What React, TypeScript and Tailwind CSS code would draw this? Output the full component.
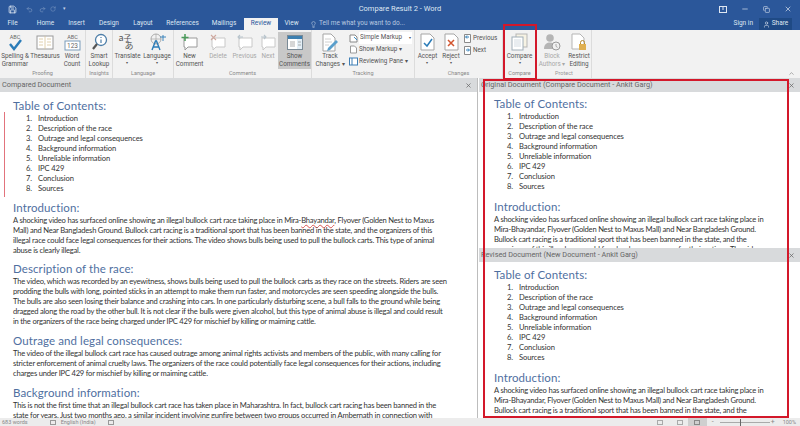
import { ReactNode } from 'react';
import { Save, Undo2, Redo2, RotateCw, Lightbulb, User, X, Minus, Copy, ChevronUp } from 'lucide-react';

const tocItems = [
  'Introduction',
  'Description of the race',
  'Outrage and legal consequences',
  'Background information',
  'Unreliable information',
  'IPC 429',
  'Conclusion',
  'Sources',
];

const tabs = [
  { name: 'File', w: 'w-[25px]' },
  { name: 'Home', w: 'w-[41px]' },
  { name: 'Insert', w: 'w-[21px]' },
  { name: 'Design', w: 'w-[44px]' },
  { name: 'Layout', w: 'w-[24px]' },
  { name: 'References', w: 'w-[55px]' },
  { name: 'Mailings', w: 'w-[28px]' },
];

const originalIntro = [
  'A shocking video has surfaced online showing an illegal bullock cart race taking place in',
  'Mira-Bhayandar, Flyover (Golden Nest to Maxus Mall) and Near Bangladesh Ground.',
  'Bullock cart racing is a traditional sport that has been banned in the state, and the',
  'organizers of this illegal race could face legal consequences for their actions. The video',
];
const revisedIntro = originalIntro.slice(0, 3);

function Heading({ children, className = '' }: { children: ReactNode; className?: string }) {
  return (
    <div className={`h-[14px] text-[11.5px] leading-[14px] text-[#4f6f9f] tracking-[0.1px] whitespace-nowrap ${className}`}>
      {children}
    </div>
  );
}

function Line({ children }: { children: ReactNode }) {
  return <div className="h-[10px] text-[7.6px] tracking-[-0.22px] leading-[10px] text-[#333] whitespace-nowrap">{children}</div>;
}

function Toc() {
  return (
    <div>
      {tocItems.map((item, i) => (
        <div key={item} className="flex h-[10px] pl-[13px] text-[7.6px] tracking-[-0.1px] leading-[10px] text-[#333] whitespace-nowrap">
          <span className="w-[12px]">{i + 1}.</span>
          <span>{item}</span>
        </div>
      ))}
    </div>
  );
}

function PaneHeader({ title, closeClass }: { title: string; closeClass: string }) {
  return (
    <div className="h-[14px] shrink-0 bg-[#d8dadc] flex items-center justify-between text-[7.3px] text-[#666] font-['Roboto',sans-serif] whitespace-nowrap">
      <span className="pl-[2px]">{title}</span>
      <X size={7} strokeWidth={2.5} className={closeClass} />
    </div>
  );
}

function RibbonButton({ w, icon, label, sub, disabled, caret, active }: {
  w: string;
  icon: ReactNode;
  label: string;
  sub?: string;
  disabled?: boolean;
  caret?: boolean;
  active?: boolean;
}) {
  return (
    <div className={`${w} h-[37px] shrink-0 flex flex-col items-center ${active ? 'bg-[#c8c8c8]' : ''}`}>
      <div className="h-[20px] flex items-center justify-center">{icon}</div>
      <div className={`text-[6.3px] leading-[8px] text-center whitespace-nowrap ${disabled ? 'text-[#a8a8a8]' : 'text-[#555]'}`}>
        <div>{label}</div>
        {sub && <div>{sub}</div>}
        {caret && <div className="text-[4px] leading-[6px]">▾</div>}
      </div>
    </div>
  );
}

function RibbonGroup({ label, w, children, disabled }: { label: string; w: string; children: ReactNode; disabled?: boolean }) {
  return (
    <div className={`${w} shrink-0 h-full flex flex-col border-r border-[#dcdcdc]`}>
      <div className="flex flex-1 pt-[2px]">{children}</div>
      <div className={`h-[9px] text-center text-[5.5px] leading-[8px] ${disabled ? 'text-[#999]' : 'text-[#888]'}`}>{label}</div>
    </div>
  );
}

function SpellIcon() {
  return (
    <svg width="18" height="19" viewBox="0 0 18 19">
      <text x="9" y="6" textAnchor="middle" fontSize="5.5" fill="#666">ABC</text>
      <path d="M4 11l4 5 7-9" fill="none" stroke="#2b7cb8" strokeWidth="2.4" />
    </svg>
  );
}

function BookIcon() {
  return (
    <svg width="18" height="17" viewBox="0 0 18 17">
      <rect x="1" y="2" width="16" height="13" fill="#fff" stroke="#9a9a9a" />
      <path d="M9 2v13M3 5h4M3 8h4M3 11h4M11 5h4M11 8h4M11 11h4" stroke="#d8c49a" strokeWidth="0.8" />
    </svg>
  );
}

function CountIcon() {
  return (
    <svg width="17" height="19" viewBox="0 0 17 19">
      <text x="8.500" y="6" textAnchor="middle" fontSize="5.5" fill="#666">ABC</text>
      <rect x="1" y="8" width="15" height="9" fill="#fff" stroke="#7a9cba" />
      <text x="8.500" y="15" textAnchor="middle" fontSize="6.5" fill="#666">123</text>
    </svg>
  );
}

function LookupIcon() {
  return (
    <svg width="17" height="18" viewBox="0 0 17 18">
      <circle cx="10" cy="7" r="5.500" fill="#fff" stroke="#4d7ea8" strokeWidth="1.3" />
      <path d="M6 11l-4 5" stroke="#555" strokeWidth="2.2" />
      <path d="M10 4v1M10 6.500V10" stroke="#4d7ea8" strokeWidth="1.2" />
    </svg>
  );
}

function TranslateIcon() {
  return (
    <span className="relative block w-[18px] h-[18px] text-[#555] font-['Noto_Sans_CJK_JP',sans-serif]">
      <span className="absolute left-0 top-0 text-[9px] leading-[10px]">a</span>
      <span className="absolute left-[5px] top-[0px] text-[8px] leading-[10px]">子</span>
      <span className="absolute left-[6px] top-[8px] text-[9px] leading-[10px]">あ</span>
    </span>
  );
}

function LanguageIcon() {
  return (
    <svg width="20" height="18" viewBox="0 0 20 18">
      <circle cx="9" cy="6" r="5" fill="none" stroke="#9a9a9a" strokeWidth="0.8" />
      <path d="M4 6h10M9 1v10" stroke="#9a9a9a" strokeWidth="0.6" />
      <path d="M5 17l3.500-9h1l3.500 9M6.500 14h5" fill="none" stroke="#2b7cb8" strokeWidth="1.4" />
      <path d="M13 4h6M16 2v6" stroke="#2b7cb8" strokeWidth="0.9" />
    </svg>
  );
}

function CommentIcon({ plus, mark, disabled }: { plus?: boolean; mark?: 'x' | 'l' | 'r'; disabled?: boolean }) {
  const stroke = disabled ? '#c8c8c8' : '#9a9a9a';
  return (
    <svg width="18" height="17" viewBox="0 0 18 17">
      <path d="M3 4h13v9H7l-3 3v-3H3z" fill="#fff" stroke={stroke} />
      {plus && <path d="M4 0v7M0.500 3.500h7" stroke="#4a9a5a" strokeWidth="1.5" />}
      {mark === 'x' && <path d="M2 1l5 5M7 1L2 6" stroke="#cfa9a0" strokeWidth="1.1" />}
      {mark === 'l' && <path d="M7 3H2m2-2L2 3l2 2" fill="none" stroke="#b8c4cc" strokeWidth="1.1" />}
      {mark === 'r' && <path d="M2 3h5M5 1l2 2-2 2" fill="none" stroke="#b8c4cc" strokeWidth="1.1" />}
    </svg>
  );
}

function ShowCommentsIcon() {
  return (
    <svg width="16" height="15" viewBox="0 0 16 15">
      <rect x="0.500" y="0.500" width="15" height="14" fill="#fff" stroke="#7a8a96" />
      <rect x="1" y="1" width="14" height="3" fill="#3d7fb0" />
      <rect x="10" y="4" width="5" height="10" fill="#e3eef6" />
      <path d="M3 7h5M3 9h5M3 11h5M11 7h3M11 10h3" stroke="#9a9a9a" strokeWidth="0.8" />
    </svg>
  );
}

function TrackIcon() {
  return (
    <svg width="18" height="19" viewBox="0 0 18 19">
      <path d="M2 1h8l4 4v13H2z" fill="#fff" stroke="#a5a5a5" />
      <path d="M4 6h6M4 9h7M4 12h4" stroke="#c4c4c4" strokeWidth="0.8" />
      <path d="M7 15l8-8 2 2-8 8-3 1z" fill="#5a9fcc" />
    </svg>
  );
}

function DocMark({ kind }: { kind: 'check' | 'x' }) {
  return (
    <svg width="15" height="18" viewBox="0 0 15 18">
      <path d="M1 1h9l4 4v12H1z" fill="#fff" stroke="#a5a5a5" />
      {kind === 'check' ? (
        <path d="M4 10l3 3 5-7" fill="none" stroke="#2b7cb8" strokeWidth="1.5" />
      ) : (
        <path d="M4 7l6 6M10 7l-6 6" stroke="#d2552f" strokeWidth="1.5" />
      )}
    </svg>
  );
}

function CompareIcon() {
  return (
    <svg width="17" height="18" viewBox="0 0 17 18">
      <rect x="5" y="1" width="11" height="13" fill="#f7f3e4" stroke="#b5b5b5" />
      <rect x="1" y="4" width="11" height="13" fill="#fff" stroke="#a0aeb8" />
      <path d="M3 7h7M3 9h7M3 11h7M3 13h7" stroke="#c8d2da" strokeWidth="0.8" />
    </svg>
  );
}

function BlockIcon() {
  return (
    <svg width="18" height="18" viewBox="0 0 18 18">
      <circle cx="7" cy="5" r="3.800" fill="#b5b5b5" />
      <path d="M1 16c0-5 3-6.500 6-6.500s4 1 5 2.500v4z" fill="#b5b5b5" />
      <circle cx="13" cy="13" r="4" fill="#f1f1f1" stroke="#9a9a9a" />
      <path d="M13 11v2.400l1.600 1" fill="none" stroke="#9a9a9a" strokeWidth="0.8" />
    </svg>
  );
}

function RestrictIcon() {
  return (
    <svg width="16" height="19" viewBox="0 0 16 19">
      <path d="M1 1h8l4 4v11H1z" fill="#fff" stroke="#b5b5b5" />
      <rect x="8" y="11" width="7" height="6" fill="#e0b050" />
      <path d="M9.500 11V9.500a2 2 0 0 1 4 0V11" fill="none" stroke="#b58a30" />
    </svg>
  );
}

function Ribbon() {
  return (
    <div className="h-[48px] shrink-0 bg-[#f2f2f2] flex font-['Roboto',sans-serif] relative">
      <RibbonGroup label="Proofing" w="w-[86px]">
        <RibbonButton w="w-[30px]" icon={<SpellIcon />} label="Spelling &" sub="Grammar" />
        <RibbonButton w="w-[30px]" icon={<BookIcon />} label="Thesaurus" />
        <RibbonButton w="w-[24px]" icon={<CountIcon />} label="Word" sub="Count" />
      </RibbonGroup>
      <RibbonGroup label="Insights" w="w-[27px]">
        <RibbonButton w="w-[26px]" icon={<LookupIcon />} label="Smart" sub="Lookup" />
      </RibbonGroup>
      <RibbonGroup label="Language" w="w-[61px]">
        <RibbonButton w="w-[29px]" icon={<TranslateIcon />} label="Translate" caret />
        <RibbonButton w="w-[30px]" icon={<LanguageIcon />} label="Language" caret />
      </RibbonGroup>
      <RibbonGroup label="Comments" w="w-[138px]">
        <RibbonButton w="w-[31px]" icon={<CommentIcon plus />} label="New" sub="Comment" />
        <RibbonButton w="w-[26px]" icon={<CommentIcon mark="x" disabled />} label="Delete" disabled />
        <RibbonButton w="w-[27px]" icon={<CommentIcon mark="l" disabled />} label="Previous" disabled />
        <RibbonButton w="w-[20px]" icon={<CommentIcon mark="r" disabled />} label="Next" disabled />
        <RibbonButton w="w-[33px]" icon={<ShowCommentsIcon />} label="Show" sub="Comments" active />
      </RibbonGroup>
      <RibbonGroup label="Tracking" w="w-[103px]">
        <RibbonButton w="w-[36px]" icon={<TrackIcon />} label="Track" sub="Changes ▾" />
        <div className="flex flex-col text-[6.3px] leading-[11.5px] text-[#555] whitespace-nowrap">
          <div className="flex items-center">
            <span className="w-[11px] h-[11px] flex items-center justify-center">
              <svg width="9" height="9" viewBox="0 0 9 9"><path d="M1 1h5l2 2v5H1z" fill="#fff" stroke="#888" /><path d="M5 3l3 3" stroke="#3f8fc4" /></svg>
            </span>
            <span className="w-[53px] h-[12px] bg-white flex items-center justify-between px-[1px]">
              Simple Markup<span className="text-[4px]">▾</span>
            </span>
          </div>
          <div className="flex items-center">
            <span className="w-[11px] h-[11px] flex items-center justify-center">
              <svg width="9" height="9" viewBox="0 0 9 9"><path d="M1.500 1h4l2 2v5h-6z" fill="#fff" stroke="#999" /></svg>
            </span>
            Show Markup ▾
          </div>
          <div className="flex items-center">
            <span className="w-[11px] h-[11px] flex items-center justify-center">
              <svg width="9" height="9" viewBox="0 0 9 9"><rect x="0.500" y="1" width="8" height="7" fill="#fff" stroke="#3f7fb5" /><path d="M3 1v7" stroke="#3f7fb5" /></svg>
            </span>
            Reviewing Pane ▾
          </div>
        </div>
      </RibbonGroup>
      <RibbonGroup label="Changes" w="w-[88px]">
        <RibbonButton w="w-[25px]" icon={<DocMark kind="check" />} label="Accept" caret />
        <RibbonButton w="w-[22px]" icon={<DocMark kind="x" />} label="Reject" caret />
        <div className="flex flex-col text-[6.3px] leading-[12px] text-[#555] pl-[2px]">
          <div className="flex items-center gap-[2px]">
            <svg width="7" height="9" viewBox="0 0 7 9"><path d="M0.500 0.500h6v8h-6z" fill="#fff" stroke="#8a8a8a" /><path d="M5 3H2m1-1.500L1.500 3 3 4.500" fill="none" stroke="#2b7cb8" /></svg>
            Previous
          </div>
          <div className="flex items-center gap-[2px]">
            <svg width="7" height="9" viewBox="0 0 7 9"><path d="M0.500 0.500h6v8h-6z" fill="#fff" stroke="#8a8a8a" /><path d="M2 4h3M4 2.500 5.500 4 4 5.500" fill="none" stroke="#2b7cb8" /></svg>
            Next
          </div>
        </div>
      </RibbonGroup>
      <RibbonGroup label="Compare" w="w-[34px]">
        <RibbonButton w="w-[33px]" icon={<CompareIcon />} label="Compare" caret />
      </RibbonGroup>
      <RibbonGroup label="Protect" w="w-[55px]" disabled>
        <RibbonButton w="w-[30px]" icon={<BlockIcon />} label="Block" sub="Authors ▾" disabled />
        <RibbonButton w="w-[24px]" icon={<RestrictIcon />} label="Restrict" sub="Editing" />
      </RibbonGroup>
      <ChevronUp size={7} className="absolute right-[5px] bottom-[1px] text-[#777]" />
    </div>
  );
}

function TitleBar() {
  return (
    <div className="h-[30px] shrink-0 bg-[#2b579a] text-white font-['Roboto',sans-serif] relative">
      <div className="h-[18px] flex items-center justify-between">
        <div className="flex items-center pl-[8px] gap-[4px] w-[120px]">
          <Save size={9} strokeWidth={2} className="text-[#e6edf6]" />
          <Undo2 size={7} className="ml-[5px] text-[#7f9bc4]" />
          <Redo2 size={7} className="ml-[2px] text-[#7f9bc4]" />
          <RotateCw size={6} className="text-[#7f9bc4]" />
          <span className="ml-[3px] text-[5px] text-[#c8d5e8]">▾</span>
        </div>
        <div className="text-[7.5px] text-[#dfe7f2]">Compare Result 2 - Word</div>
        <div className="flex items-center justify-end gap-[14px] pr-[8px] w-[120px] text-[#dfe7f2]">
          <svg width="8" height="7" viewBox="0 0 8 7"><rect x="0.500" y="0.500" width="7" height="6" fill="none" stroke="currentColor" /><path d="M4 1v3" stroke="currentColor" /></svg>
          <Minus size={8} />
          <Copy size={7} />
          <X size={8} />
        </div>
      </div>
      <div className="h-[12px] flex items-stretch text-[6.5px] text-[#dfe7f2] whitespace-nowrap">
        {tabs.map((t) => (
          <div key={t.name} className={`${t.w} flex items-center justify-center`}>{t.name}</div>
        ))}
        <div className="ml-[6px] w-[34px] bg-[#f2f2f2] text-[#2b579a] flex items-center justify-center">Review</div>
        <div className="w-[27px] flex items-center justify-center">View</div>
        <div className="ml-[5px] flex items-center gap-[2px] text-[#b9c9e0]">
          <Lightbulb size={7} />
          Tell me what you want to do...
        </div>
        <div className="ml-auto flex items-center">
          <span className="mr-[6px]">Sign in</span>
          <span className="h-full w-[33px] mr-[8px] bg-[#1f4a85] flex items-center justify-center gap-[2px]">
            <User size={7} />
            Share
          </span>
        </div>
      </div>
    </div>
  );
}

function ComparedDocument() {
  return (
    <div className="w-[478px] shrink-0 flex flex-col border-r border-[#bdbdbd]">
      <PaneHeader title="Compared Document" closeClass="mr-[5px]" />
      <div className="flex-1 overflow-hidden bg-white pl-[13px] pt-[7px] font-['Lato',sans-serif] relative">
        <div className="absolute left-[4px] top-[20px] h-[85px] w-[1px] bg-[#e2737c]" />
        <Heading>Table of Contents:</Heading>
        <Toc />
        <Heading className="mt-[8px]">Introduction:</Heading>
        <Line>A shocking video has surfaced online showing an illegal bullock cart race taking place in Mira-<span className="underline decoration-wavy decoration-[#d9534f]">Bhayandar</span>, Flyover (Golden Nest to Maxus</Line>
        <Line>Mall) and Near Bangladesh Ground. Bullock cart racing is a traditional sport that has been banned in the state, and the organizers of this</Line>
        <Line>illegal race could face legal consequences for their actions. The video shows bulls being used to pull the bullock carts. This type of animal</Line>
        <Line>abuse is clearly illegal.</Line>
        <Heading className="mt-[7px]">Description of the race:</Heading>
        <Line>The video, which was recorded by an eyewitness, shows bulls being used to pull the bullock carts as they race on the streets. Riders are seen</Line>
        <Line>prodding the bulls with long, pointed sticks in an attempt to make them run faster, and motorcycles are seen speeding alongside the bulls.</Line>
        <Line>The bulls are also seen losing their balance and crashing into cars. In one particularly disturbing scene, a bull falls to the ground while being</Line>
        <Line>dragged along the road by the other bull. It is not clear if the bulls were given alcohol, but this type of animal abuse is illegal and could result</Line>
        <Line>in the organizers of the race being charged under IPC 429 for mischief by killing or maiming cattle.</Line>
        <Heading className="mt-[8px]">Outrage and legal consequences:</Heading>
        <Line>The video of the illegal bullock cart race has caused outrage among animal rights activists and members of the public, with many calling for</Line>
        <Line>stricter enforcement of animal cruelty laws. The organizers of the race could potentially face legal consequences for their actions, including</Line>
        <Line>charges under IPC 429 for mischief by killing or maiming cattle.</Line>
        <Heading className="mt-[8px]">Background information:</Heading>
        <Line>This is not the first time that an illegal bullock cart race has taken place in Maharashtra. In fact, bullock cart racing has been banned in the</Line>
        <Line>state for years. Just two months ago, a similar incident involving gunfire between two groups occurred in Ambernath in connection with</Line>
      </div>
    </div>
  );
}

function SourcePane({ title, paddingTop, className, intro }: { title: string; paddingTop: string; className: string; intro: string[] }) {
  return (
    <div className={`flex flex-col overflow-hidden ${className}`}>
      <PaneHeader title={title} closeClass="mr-[5px] shrink-0" />
      <div className={`flex-1 overflow-hidden bg-white pl-[15px] font-['Lato',sans-serif] ${paddingTop}`}>
        <Heading>Table of Contents:</Heading>
        <Toc />
        <Heading className="mt-[9px]">Introduction:</Heading>
        {intro.map((line) => (
          <Line key={line}>{line}</Line>
        ))}
      </div>
    </div>
  );
}

function StatusBar() {
  return (
    <div className="h-[8px] shrink-0 bg-[#ececec] flex items-center text-[5.5px] leading-[8px] text-[#888] font-['Roboto',sans-serif] whitespace-nowrap overflow-hidden">
      <span className="ml-[2px]">683 words</span>
      <span className="ml-[22px] w-[6px] h-[5px] border border-[#999]" />
      <span className="ml-[5px]">English (India)</span>
      <span className="ml-[12px] w-[6px] h-[5px] border border-[#999]" />
      <div className="ml-auto flex items-center h-full">
        <span className="w-[6px] h-[5px] border border-[#aaa]" />
        <span className="ml-[14px] w-[6px] h-[5px] border border-[#aaa]" />
        <span className="ml-[5px] w-[19px] h-full bg-[#cfcfcf] flex items-center justify-center">
          <span className="w-[6px] h-[5px] border border-[#888]" />
        </span>
        <span className="ml-[5px] text-[7px]">-</span>
        <span className="ml-[6px] w-[50px] h-[1px] bg-[#aaa] relative">
          <span className="absolute left-[20px] top-[-3px] w-[1px] h-[7px] bg-[#666]" />
        </span>
        <span className="ml-[1px] text-[7px]">+</span>
        <span className="ml-[8px] mr-[4px]">100%</span>
      </div>
    </div>
  );
}

export default function App() {
  return (
    <div className="w-[800px] h-[426px] overflow-hidden flex flex-col bg-white relative">
      <TitleBar />
      <Ribbon />
      <div className="flex-1 min-h-0 flex">
        <ComparedDocument />
        <div className="w-[1px] bg-white" />
        <div className="flex-1 flex flex-col min-w-0">
          <SourcePane title="Original Document (Compare Document - Ankit Garg)" paddingTop="pt-[5px]" className="h-[170px] shrink-0" intro={originalIntro} />
          <SourcePane title="Revised Document (New Document - Ankit Garg)" paddingTop="pt-[6px]" className="flex-1 min-h-0" intro={revisedIntro} />
        </div>
      </div>
      <StatusBar />
      {/* red callouts drawn over the ribbon and panes */}
      <div className="absolute left-[503px] top-[24px] w-[34px] h-[56px] border-2 border-[#d3182a] pointer-events-none" />
      <div className="absolute left-[483px] top-[79px] w-[306px] h-[339px] border-2 border-[#d3182a] pointer-events-none" />
    </div>
  );
}
